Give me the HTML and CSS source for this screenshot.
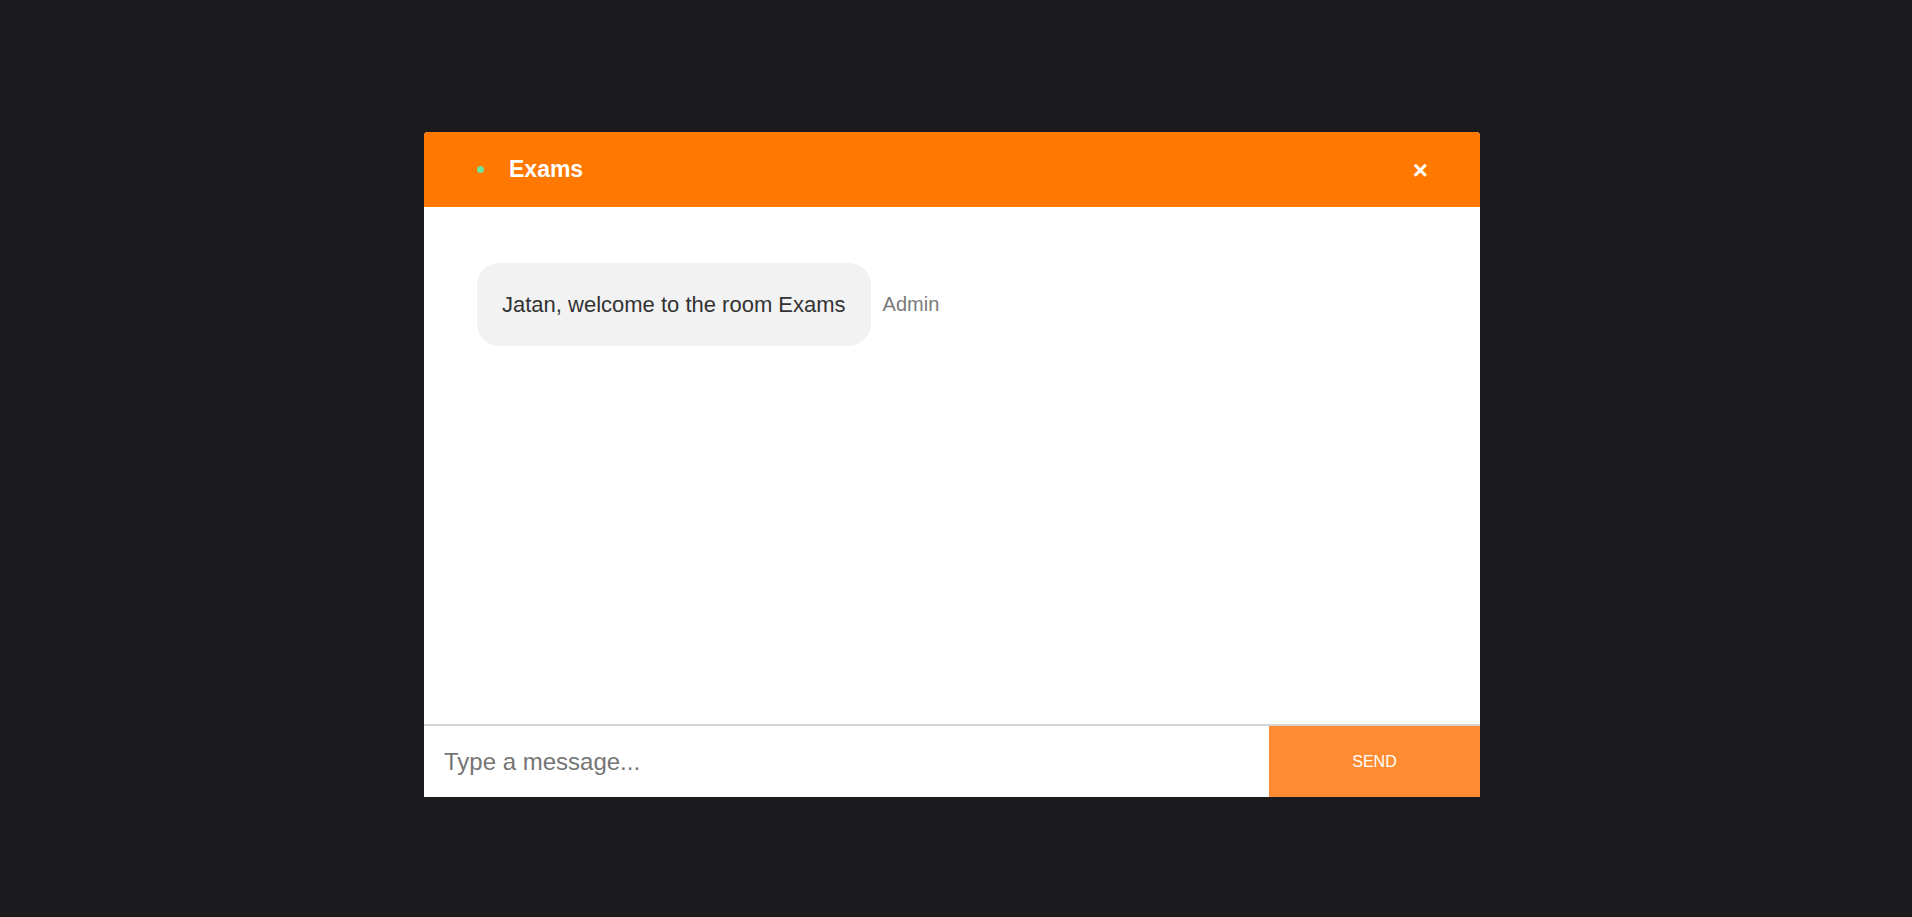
FILE: index.html
```html
<!DOCTYPE html>
<html lang="en">
<head>
<meta charset="utf-8">
<title>Exams</title>
<link rel="stylesheet" href="styles.css">
</head>
<body>
<div class="page">
  <div class="chat">
    <div class="chat-header">
      <span class="status-dot"></span>
      <span class="room-name">Exams</span>
      <span class="close">&times;</span>
    </div>
    <div class="messages">
      <div class="message">
        <div class="bubble">Jatan, welcome to the room Exams</div>
        <span class="author">Admin</span>
      </div>
    </div>
    <form class="composer">
      <input class="composer-input" type="text" placeholder="Type a message...">
      <button class="send" type="button">SEND</button>
    </form>
  </div>
</div>
</body>
</html>
```

FILE: styles.css
```css
* { box-sizing: border-box; }
html, body {
  margin: 0;
  padding: 0;
  height: 100%;
  background: #1b1b1d;
  font-family: "Liberation Sans", Arial, sans-serif;
}
.page {
  height: 100%;
  display: flex;
  align-items: flex-start;
  justify-content: flex-start;
  padding: 132px 0 0 424px;
}
.chat {
  width: 1056px;
  display: flex;
  flex-direction: column;
  background: #fff;
  border-radius: 4px 4px 0 0;
  overflow: hidden;
}
.chat-header {
  height: 75px;
  background: #ff7800;
  display: flex;
  align-items: center;
  padding: 0 0 0 53px;
  color: #fff;
}
.status-dot {
  width: 7px;
  height: 7px;
  border-radius: 50%;
  background: #6be39b;
  margin-right: 25px;
}
.room-name {
  font-size: 23px;
  font-weight: bold;
}
.close {
  margin-left: auto;
  margin-right: 52px;
  font-size: 26px;
  font-weight: bold;
  line-height: 1;
}
.messages {
  height: 517px;
  padding: 56px 53px 0;
}
.message {
  display: flex;
  align-items: center;
}
.bubble {
  background: #f2f2f2;
  color: #333;
  font-size: 22px;
  line-height: 33px;
  padding: 25px;
  border-radius: 22px;
}
.author {
  margin-left: 12px;
  font-size: 20px;
  color: #7a7a7a;
}
.composer {
  margin: 0;
  display: flex;
  height: 73px;
  border-top: 2px solid #d3d3d3;
}
.composer-input {
  flex: 1;
  border: none;
  outline: none;
  padding: 0 20px;
  font-family: "Liberation Sans", Arial, sans-serif;
  font-size: 24px;
  color: #333;
  background: #fff;
}
.composer-input::placeholder { color: #757575; }
.send {
  width: 211px;
  border: none;
  background: #ff8c33;
  color: #fff;
  font-family: "Liberation Sans", Arial, sans-serif;
  font-size: 16px;
  padding: 0;
}
```
